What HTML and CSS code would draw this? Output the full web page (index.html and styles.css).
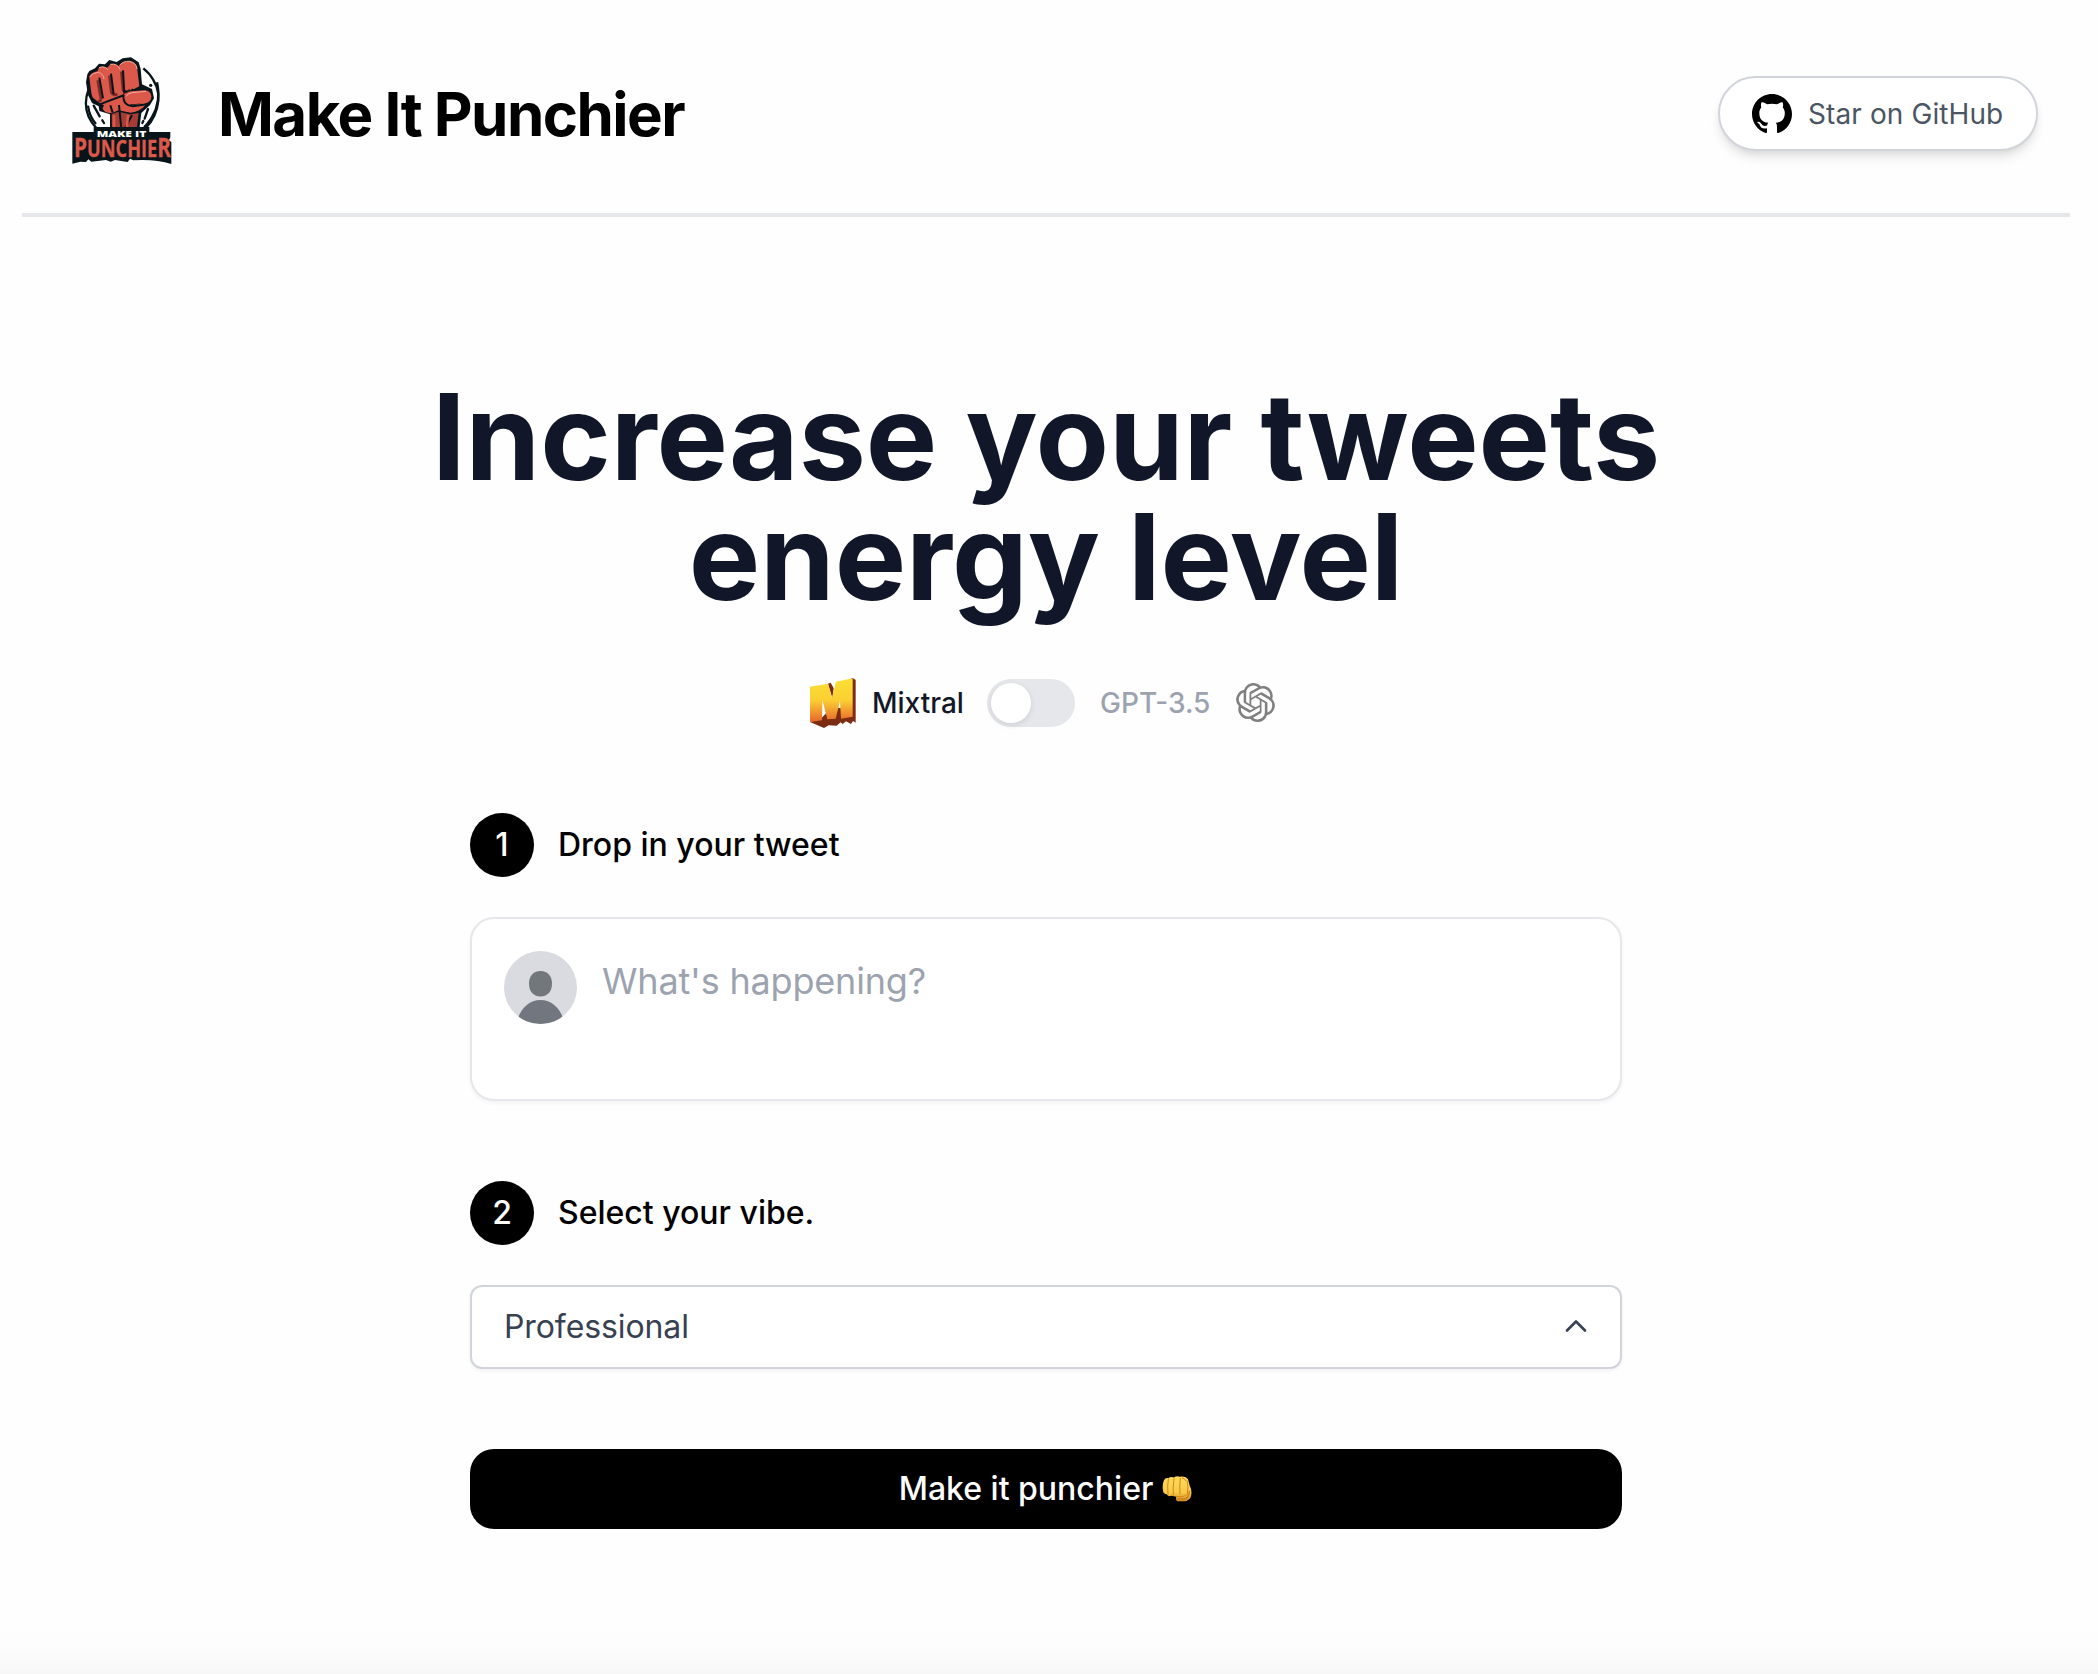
FILE: index.html
```html
<!DOCTYPE html>
<html lang="en">
<head>
<meta charset="utf-8">
<title>Make It Punchier</title>
<link rel="stylesheet" href="styles.css">
</head>
<body>
<div class="page">
  <header class="header">
    <a class="brand">
      <svg class="logo" viewBox="0 0 375 411">
        <path d="M106 100C70 145 65 205 110 250L150 262H240C290 230 312 155 280 105C272 90 260 78 250 70" fill="#fff" stroke="#07151b" stroke-width="7"/>
        <path d="M84 182Q88 215 108 237M291 112Q304 170 276 216Q262 238 252 246" fill="none" stroke="#07151b" stroke-width="7"/>
        <path d="M101 182L119 214M127 226L132 234M264 192L254 221M250 228L247 234" stroke="#07151b" stroke-width="7" stroke-linecap="round"/>
        <circle cx="272" cy="121" r="5" fill="#07151b"/>
        <path d="M82 88L88 78L105 70L117 56L135 58L148 45L170 51L188 40L213 37L236 52L242 72L246 118L276 132L282 160L270 180L244 204L238 252H150V208L118 198L116 184L96 174L84 150L78 112Z" fill="#07151b"/>
        <path d="M88 97Q90 84 112 79L117 68Q128 62 142 68L151 58Q165 54 176 63Q180 51 208 48Q231 52 232 75L238 124L206 140L196 158L212 180Q238 180 249 172L258 178Q242 200 212 203L176 196L154 205Q130 204 128 190L132 181L112 172Q97 164 94 144Z" fill="#dc584b"/>
        <path d="M89 96Q96 83 115 82Q130 86 132 102M117 68Q134 61 144 75M151 58Q172 54 180 74M181 59Q190 48 208 49Q230 53 231 72" fill="none" stroke="#f1aa9c" stroke-width="3"/>
        <path d="M113 106L121 152Q127 170 114 168M148 92L154 142Q160 154 172 147M184 80L189 136Q200 146 210 134" fill="none" stroke="#7e2a29" stroke-width="8"/>
        <path d="M118 98L129 160M153 86L161 148M189 76L193 146M96 160L119 178L193 150M190 136Q204 146 220 133M190 154Q190 182 218 184L259 178" fill="none" stroke="#07151b" stroke-width="6" stroke-linejoin="round"/>
        <rect x="194" y="137" width="80" height="39" rx="19" fill="#dc584b" transform="rotate(-4 234 156)"/>
        <path d="M199 154Q202 145 216 143L258 139" fill="none" stroke="#f1aa9c" stroke-width="3"/>
        <path d="M155 207L176 200L210 208L236 204L230 254H156Z" fill="#a33d35"/>
        <path d="M177 180L184 252M151 181L158 203M216 210L196 248" stroke="#07151b" stroke-width="6"/>
        <path d="M162 210V250M204 210L200 250" stroke="#dc584b" stroke-width="8"/>
        <path d="M37 261H101V246H268V261H331V277L327 286L334 291V357Q286 342 220 346L210 341L203 351L165 345L152 350L138 345L94 350L85 343L78 351L61 350L37 356Z" fill="#07151b"/>
        <text x="110" y="277" textLength="149" lengthAdjust="spacingAndGlyphs" class="logo-small">MAKE IT</text>
        <text x="42" y="337" textLength="291" lengthAdjust="spacingAndGlyphs" class="logo-large"><tspan class="logo-cap">P</tspan>UNCHIE<tspan class="logo-cap">R</tspan></text>
      </svg>
      <span class="brand-name">Make It Punchier</span>
    </a>
    <a class="github">
      <svg class="github-icon" viewBox="0 0 16 16"><path d="M8 0C3.58 0 0 3.58 0 8c0 3.54 2.29 6.53 5.47 7.59.4.07.55-.17.55-.38 0-.19-.01-.82-.01-1.49-2.01.37-2.53-.49-2.69-.94-.09-.23-.48-.94-.82-1.13-.28-.15-.68-.52-.01-.53.63-.01 1.08.58 1.23.82.72 1.21 1.87.87 2.33.66.07-.52.28-.87.51-1.07-1.78-.2-3.64-.89-3.64-3.95 0-.87.31-1.59.82-2.15-.08-.2-.36-1.02.08-2.12 0 0 .67-.21 2.2.82.64-.18 1.32-.27 2-.27s1.36.09 2 .27c1.53-1.04 2.2-.82 2.2-.82.44 1.1.16 1.92.08 2.12.51.56.82 1.27.82 2.15 0 3.07-1.87 3.75-3.65 3.95.29.25.54.73.54 1.48 0 1.07-.01 1.93-.01 2.2 0 .21.15.46.55.38A8.01 8.01 0 0 0 16 8c0-4.42-3.58-8-8-8z"/></svg>
      <span>Star on GitHub</span>
    </a>
  </header>
  <main class="main">
    <h1 class="headline">Increase your tweets<br>energy level</h1>
    <div class="models">
      <svg class="mixtral-icon" viewBox="27 24 141 150">
        <defs><linearGradient id="gold" x1="0" y1="0" x2="0" y2="1"><stop offset="0" stop-color="#fbdf35"/><stop offset=".5" stop-color="#fbcf33"/><stop offset="1" stop-color="#e8662b"/></linearGradient></defs>
        <path d="M84 41L92 38L101 55L97 84ZM150 27L158 24L167 30V158L159 153L153 162L138 154L128 162L122 157L110 167L86 166L72 174L30 156L62 146L98 110L150 120Z" fill="#7c2c12"/>
        <path d="M30 50L84 41L96 84L108 35L158 25V140L123 146L120 92L107 146L82 148L67 89L66 151L30 156Z" fill="url(#gold)"/>
      </svg>
      <span class="model model-on">Mixtral</span>
      <span class="switch"><span class="knob"></span></span>
      <span class="model model-off">GPT-3.5</span>
      <svg class="openai-icon" viewBox="0 0 24 24"><path d="M22.2819 9.8211a5.9847 5.9847 0 0 0-.5157-4.9108 6.0462 6.0462 0 0 0-6.5098-2.9A6.0651 6.0651 0 0 0 4.9807 4.1818a5.9847 5.9847 0 0 0-3.9977 2.9 6.0462 6.0462 0 0 0 .7427 7.0966 5.98 5.98 0 0 0 .511 4.9107 6.051 6.051 0 0 0 6.5146 2.9001A5.9847 5.9847 0 0 0 13.2599 24a6.0557 6.0557 0 0 0 5.7718-4.2058 5.9894 5.9894 0 0 0 3.9977-2.9001 6.0557 6.0557 0 0 0-.7475-7.0729zm-9.022 12.6081a4.4755 4.4755 0 0 1-2.8764-1.0408l.1419-.0804 4.7783-2.7582a.7948.7948 0 0 0 .3927-.6813v-6.7369l2.02 1.1686a.071.071 0 0 1 .038.052v5.5826a4.504 4.504 0 0 1-4.4945 4.4944zm-9.6607-4.1254a4.4708 4.4708 0 0 1-.5346-3.0137l.142.0852 4.783 2.7582a.7712.7712 0 0 0 .7806 0l5.8428-3.3685v2.3324a.0804.0804 0 0 1-.0332.0615L9.74 19.9502a4.4992 4.4992 0 0 1-6.1408-1.6464zM2.3408 7.8956a4.485 4.485 0 0 1 2.3655-1.9728V11.6a.7664.7664 0 0 0 .3879.6765l5.8144 3.3543-2.0201 1.1685a.0757.0757 0 0 1-.071 0l-4.8303-2.7865A4.504 4.504 0 0 1 2.3408 7.872zm16.5963 3.8558L13.1038 8.364 15.1192 7.2a.0757.0757 0 0 1 .071 0l4.8303 2.7913a4.4944 4.4944 0 0 1-.6765 8.1042v-5.6772a.79.79 0 0 0-.407-.667zm2.0107-3.0231l-.142-.0852-4.7735-2.7818a.7759.7759 0 0 0-.7854 0L9.409 9.2297V6.8974a.0662.0662 0 0 1 .0284-.0615l4.8303-2.7866a4.4992 4.4992 0 0 1 6.6802 4.66zM8.3065 12.863l-2.02-1.1638a.0804.0804 0 0 1-.038-.0567V6.0742a4.4992 4.4992 0 0 1 7.3757-3.4537l-.142.0805L8.704 5.459a.7948.7948 0 0 0-.3927.6813zm1.0976-2.3654l2.602-1.4998 2.6069 1.4998v2.9994l-2.5974 1.4997-2.6067-1.4997Z"/></svg>
    </div>
    <section class="form">
      <div class="step"><span class="num">1</span><span class="label">Drop in your tweet</span></div>
      <div class="tweet">
        <svg class="avatar" viewBox="0 0 73 73">
          <defs><clipPath id="round"><circle cx="36.5" cy="36.5" r="36.5"/></clipPath></defs>
          <g clip-path="url(#round)"><rect width="73" height="73" fill="#dadbe1"/><path d="M36.5 20C44 20 48 25.500 48 32.500C48 40 44 45.500 36.500 45.500S25 40 25 32.500C25 25.500 29 20 36.500 20Z" fill="#72777c"/><path d="M14 67C18 56 26 49 36.500 49S55 56 59 67V73H14Z" fill="#72777f"/></g>
        </svg>
        <span class="placeholder">What's happening?</span>
      </div>
      <div class="step step-two"><span class="num">2</span><span class="label">Select your vibe.</span></div>
      <div class="select">
        <span>Professional</span>
        <svg class="chevron" viewBox="0 0 22 14"><path d="M2 11.500L11 2.500L20 11.500" fill="none" stroke="#374151" stroke-width="2.600" stroke-linecap="round" stroke-linejoin="round"/></svg>
      </div>
      <div class="submit">
        <span>Make it punchier</span>
        <svg class="fist" viewBox="0 0 90 80">
          <defs><linearGradient id="skin" x1="0" y1="0" x2="0" y2="1"><stop offset="0" stop-color="#ffda5b"/><stop offset=".65" stop-color="#f8c947"/><stop offset="1" stop-color="#d98d22"/></linearGradient></defs>
          <path d="M6 15Q10 7 19 9Q26 3 36 7Q44 0 54 5Q70 1 78 12L83 31Q92 48 86 66Q80 77 67 78H46Q40 75 43 65L29 62Q19 66 14 57Q3 56 3 45Q0 28 6 15Z" fill="url(#skin)"/>
          <path d="M19 12Q15 34 18 56M36 11Q32 35 34 60M55 10Q52 32 54 56M76 18Q79 38 76 58Q68 66 44 64M61 8Q69 10 72 17" fill="none" stroke="#cf891f" stroke-width="3" stroke-linecap="round"/>
          <path d="M47 71H70Q82 65 82 48" fill="none" stroke="#c8791c" stroke-width="4" stroke-linecap="round"/>
        </svg>
      </div>
    </section>
  </main>
  <div class="fade"></div>
</div>
</body>
</html>
```

FILE: styles.css
```css
* { box-sizing: border-box; }
body { margin: 0; background: #fefefe; font-family: Inter, "Liberation Sans", sans-serif; color: #000; }
svg { display: block; flex: none; }
.page { width: 2098px; height: 1674px; display: flex; flex-direction: column; overflow: hidden; }
.header { margin: 0 28px 0 22px; height: 217px; flex: none; padding: 14px 32px 0 38px; border-bottom: 4px solid #e5e7eb; display: flex; align-items: center; justify-content: space-between; }
.brand { display: flex; align-items: center; gap: 33px; }
.logo { width: 125px; height: 137px; }
.logo-small { font: 800 25px "Open Sans", sans-serif; fill: #fff; }
.logo-large { font: 700 70px "Open Sans", sans-serif; fill: #dc584b; stroke: #dc584b; stroke-width: 1px; }
.logo-cap { font-size: 80px; }
.brand-name { font-size: 60px; line-height: 72px; font-weight: 700; letter-spacing: -1.540px; white-space: nowrap; }
.github { width: 320px; height: 75px; border: 2px solid #d1d5db; border-radius: 38px; background: #fff; display: flex; align-items: center; gap: 16px; padding-left: 32px; font-size: 28px; letter-spacing: .1px; color: #4b5563; box-shadow: 0 8px 12px -2px rgba(0,0,0,.1), 0 4px 8px -4px rgba(0,0,0,.1); }
.github-icon { width: 40px; height: 40px; }
.main { width: 2092px; display: flex; flex-direction: column; align-items: center; padding-top: 160px; }
.headline { margin: 0; font-size: 120px; line-height: 120px; font-weight: 700; letter-spacing: -.1px; color: #111629; text-align: center; white-space: nowrap; }
.models { width: 474px; height: 54px; margin-top: 59px; display: flex; align-items: center; font-size: 28px; font-weight: 500; }
.mixtral-icon { width: 47px; height: 50px; }
.model { white-space: nowrap; }
.model-on { color: #111827; margin-left: 16px; width: 115px; }
.model-off { color: #9ca3af; margin-left: 25px; width: 136px; }
.switch { width: 88px; height: 48px; border-radius: 24px; background: #e5e7eb; padding: 4px; }
.knob { display: block; width: 40px; height: 40px; border-radius: 50%; background: #fff; box-shadow: 0 2px 6px rgba(0,0,0,.1); }
.openai-icon { width: 39px; height: 39px; fill: #808080; margin-bottom: 1px; }
.form { width: 1152px; margin-top: 83px; }
.step { display: flex; align-items: center; gap: 24px; height: 64px; font-size: 32px; font-weight: 500; }
.step-two { margin-top: 80px; }
.num { width: 64px; height: 64px; border-radius: 50%; background: #000; color: #fff; display: flex; align-items: center; justify-content: center; padding-bottom: 2px; }
.label { padding-bottom: 2px; }
.tweet { margin-top: 40px; height: 184px; border: 2px solid #e5e7eb; border-radius: 24px; background: #fff; padding: 32px; display: flex; gap: 25px; box-shadow: 0 2px 4px rgba(0,0,0,.05); }
.avatar { width: 73px; height: 73px; }
.placeholder { font-size: 36px; line-height: 60px; letter-spacing: -.180px; color: #9ca3af; }
.select { margin-top: 40px; height: 84px; border: 2px solid #d1d5db; border-radius: 12px; background: #fff; padding: 0 33px 2px 32px; display: flex; align-items: center; justify-content: space-between; font-size: 32px; letter-spacing: -.1px; color: #374151; box-shadow: 0 2px 4px rgba(0,0,0,.05); }
.chevron { width: 22px; height: 14px; }
.submit { margin-top: 80px; height: 80px; padding: 0 1px 2px 0; border-radius: 24px; background: #000; color: #fff; display: flex; align-items: center; justify-content: center; gap: 9px; font-size: 32px; font-weight: 500; }
.fist { width: 30px; height: 27px; }
.fade { margin-top: auto; height: 44px; flex: none; background: linear-gradient(#fefefe, #fcfcfc 50%, #f7f7f7); }
```
